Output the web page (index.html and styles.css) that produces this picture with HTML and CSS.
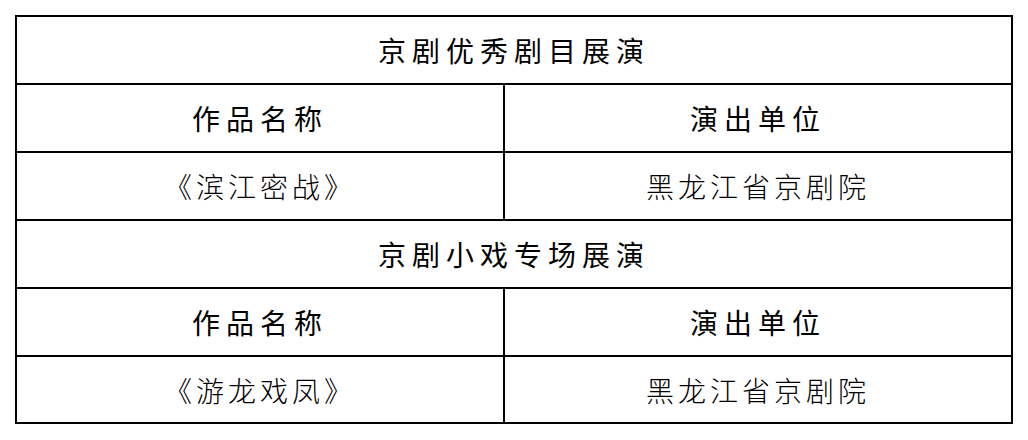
FILE: index.html
```html
<!DOCTYPE html>
<html lang="zh-CN">
<head>
<meta charset="utf-8">
<title>京剧展演</title>
<link rel="stylesheet" href="styles.css">
</head>
<body>
<div class="tbl">
  <div class="row full"><div class="cell head">京剧优秀剧目展演</div></div>
  <div class="row"><div class="cell left head">作品名称</div><div class="cell head">演出单位</div></div>
  <div class="row"><div class="cell left data">《滨江密战》</div><div class="cell data">黑龙江省京剧院</div></div>
  <div class="row full"><div class="cell head">京剧小戏专场展演</div></div>
  <div class="row"><div class="cell left head">作品名称</div><div class="cell head">演出单位</div></div>
  <div class="row last"><div class="cell left data">《游龙戏凤》</div><div class="cell data">黑龙江省京剧院</div></div>
</div>
</body>
</html>
```
FILE: styles.css
```css
html, body {
  margin: 0;
  padding: 0;
  background: #fff;
}
body {
  padding: 15px 0 0 15px;
  font-family: "Noto Sans CJK SC", "Noto Sans", sans-serif;
  color: #000;
}
.tbl {
  width: 998px;
  border: 2px solid #000;
  box-sizing: border-box;
}
.row {
  display: grid;
  grid-template-columns: 488px 506px;
  height: 68px;
  box-sizing: border-box;
  border-bottom: 2px solid #000;
}
.row.full {
  grid-template-columns: 994px;
}
.row.last {
  border-bottom: none;
  height: 65px;
}
.cell {
  display: flex;
  align-items: center;
  justify-content: center;
  box-sizing: border-box;
  font-size: 28px;
  line-height: 1;
}
.cell.left {
  border-right: 2px solid #000;
}
.head {
  letter-spacing: 6px;
  font-weight: 400;
}
.data {
  letter-spacing: 4px;
  font-weight: 300;
}
```
